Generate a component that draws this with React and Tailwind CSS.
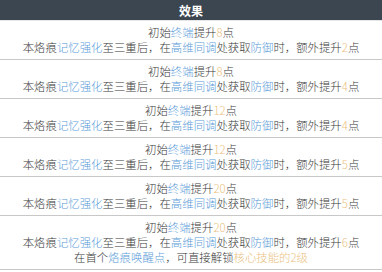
const rows = [
  { base: "8", extra: "2" },
  { base: "8", extra: "4" },
  { base: "12", extra: "4" },
  { base: "12", extra: "5" },
  { base: "20", extra: "5" },
  { base: "20", extra: "6", unlock: true },
];

const Blue = ({ children }) => <span className="text-[#5a9bd8]">{children}</span>;
const Gold = ({ children }) => <span className="text-[#ebbf80]">{children}</span>;

export default function App() {
  return (
    <div
      className="w-[382px] h-[272px] bg-white text-[#3a3a3a] text-[11.4px] leading-[15px] font-light"
      style={{ fontFamily: '"Noto Sans CJK SC", "Noto Sans", sans-serif' }}
    >
      <div className="h-[20px] bg-[#3c4650] text-white font-bold text-[12px] flex items-center justify-center">
        效果
      </div>
      <div className="border-t border-[#e6e6e6]">
        {rows.map((r, i) => (
          <div key={i} className="border-b border-[#c8c8c8] py-[4px] text-center">
            <div>
              初始<Blue>终端</Blue>提升<Gold>{r.base}</Gold>点
            </div>
            <div>
              本烙痕<Blue>记忆强化</Blue>至三重后，在<Blue>高维同调</Blue>处获取<Blue>防御</Blue>时，额外提升
              <Gold>{r.extra}</Gold>点
            </div>
            {r.unlock && (
              <div>
                在首个<Blue>烙痕唤醒点</Blue>，可直接解锁<Gold>核心技能的2级</Gold>
              </div>
            )}
          </div>
        ))}
      </div>
    </div>
  );
}
